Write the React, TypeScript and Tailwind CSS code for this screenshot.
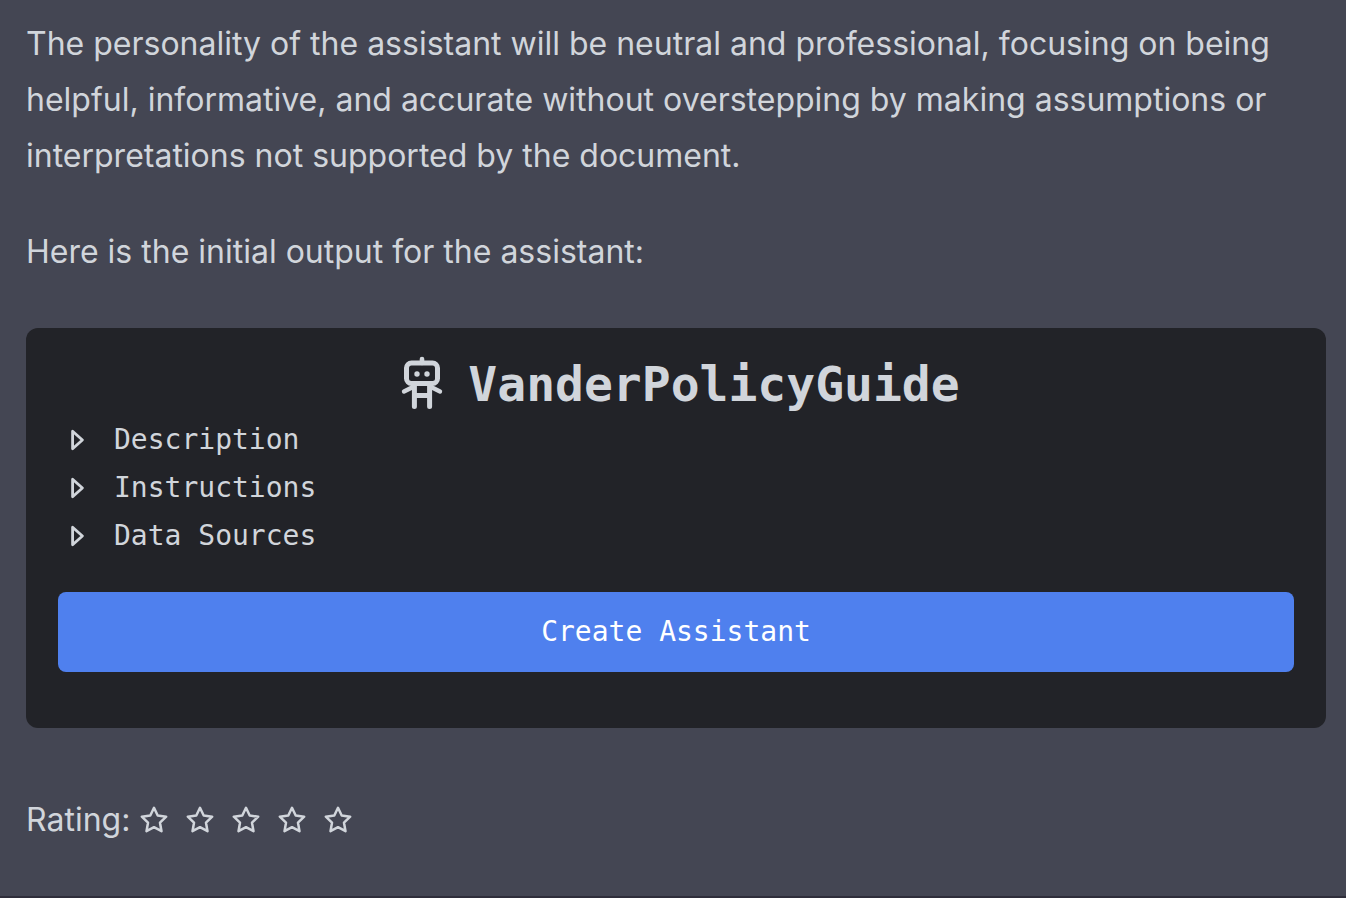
import { useState } from "react";

const sections = ["Description", "Instructions", "Data Sources"];

function RobotIcon() {
  return (
    <svg
      viewBox="0 0 60 60"
      className="size-[60px] shrink-0"
      fill="none"
      stroke="currentColor"
      strokeWidth="5"
      strokeLinecap="round"
      strokeLinejoin="round"
      aria-hidden="true"
    >
      <path d="M30 5v4" strokeWidth="4.6" />
      <rect x="14.5" y="9" width="31" height="20.5" rx="5" />
      <path d="M22.4 30v22.5M37.6 30v22.5M22.4 41.6h15.2" />
      <path d="M21 33l-9 4.5M39 33l9 4.5" strokeWidth="4.4" />
      <circle cx="25" cy="20" r="2.7" fill="currentColor" stroke="none" />
      <circle cx="35" cy="20" r="2.7" fill="currentColor" stroke="none" />
    </svg>
  );
}

function StarIcon({ filled }: { filled: boolean }) {
  return (
    <svg
      viewBox="0 0 28 28"
      className="size-7"
      fill={filled ? "currentColor" : "none"}
      stroke="currentColor"
      strokeWidth="2.5"
      strokeLinejoin="round"
      aria-hidden="true"
    >
      <path d="M14 1.8l3.7 7.7 8.5 1.2-6.2 6 1.5 8.5-7.5-4-7.5 4 1.5-8.5-6.2-6 8.5-1.2z" />
    </svg>
  );
}

function Section({ title }: { title: string }) {
  return (
    <details className="group">
      <summary className="flex h-12 cursor-pointer list-none items-center gap-7 pl-3">
        <svg
          viewBox="0 0 16 24"
          className="h-6 w-4 group-open:rotate-90"
          fill="none"
          stroke="currentColor"
          strokeWidth="2.8"
          strokeLinejoin="round"
          aria-hidden="true"
        >
          <path d="M2.6 3.2v17.6L12.4 12z" />
        </svg>
        {title}
      </summary>
    </details>
  );
}

function AssistantCard() {
  return (
    <section className="rounded-xl bg-[#222328] px-8 pt-6 pb-14 font-['DejaVu_Sans_Mono',monospace] text-[28px]">
      <h2 className="flex h-16 items-center justify-center gap-4 text-5xl font-bold">
        <RobotIcon />
        VanderPolicyGuide
      </h2>
      {sections.map((title) => (
        <Section key={title} title={title} />
      ))}
      <button
        type="button"
        className="mt-8 h-20 w-full cursor-pointer rounded-lg bg-[#4f80ee] text-white"
      >
        Create Assistant
      </button>
    </section>
  );
}

function Rating() {
  const [rating, setRating] = useState(0);

  return (
    <div className="mt-16 flex items-center gap-2.5">
      <span>Rating:</span>
      <div className="flex gap-[18px]">
        {[1, 2, 3, 4, 5].map((value) => (
          <button
            key={value}
            type="button"
            aria-label={`Rate ${value} of 5`}
            onClick={() => setRating(value)}
            className="cursor-pointer"
          >
            <StarIcon filled={value <= rating} />
          </button>
        ))}
      </div>
    </div>
  );
}

export default function App() {
  return (
    <main className="min-h-screen border-b-2 border-[#2f2e3b] bg-[#444653] pt-4 pr-5 pb-12 pl-[26px] font-['Inter',sans-serif] text-[32px] leading-[56px] text-[#d1d5db]">
      <p className="mb-10">
        The personality of the assistant will be neutral and professional,
        focusing on being helpful, informative, and accurate without
        overstepping by making assumptions or interpretations not supported by
        the document.
      </p>
      <p className="mb-12">Here is the initial output for the assistant:</p>
      <AssistantCard />
      <Rating />
    </main>
  );
}
